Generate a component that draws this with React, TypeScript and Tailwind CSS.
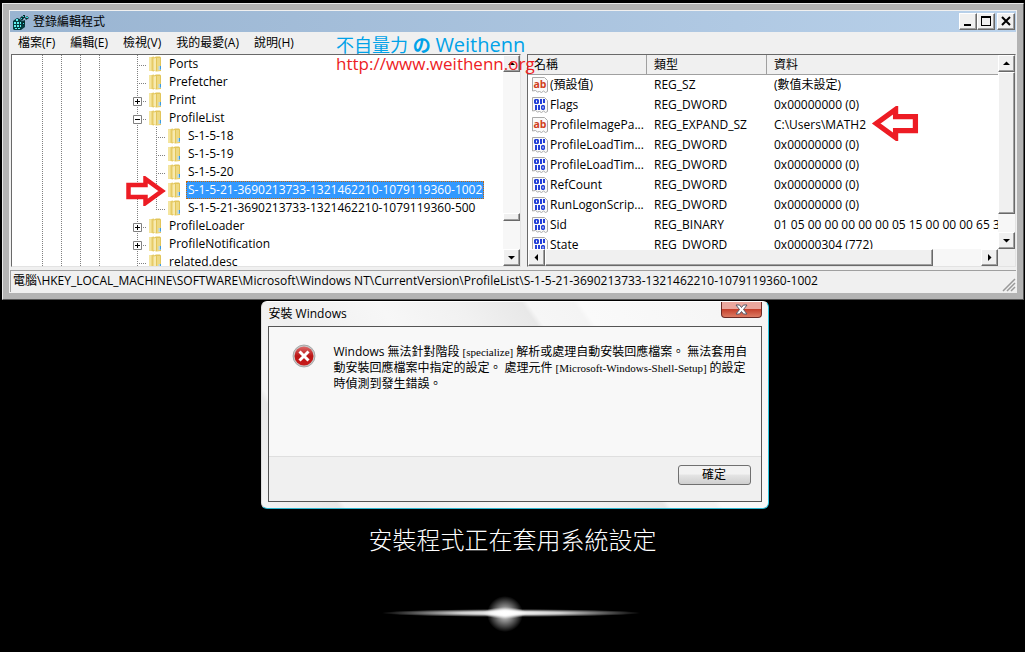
import type { ReactNode } from 'react'

const UI_FONT = "font-['Open_Sans','Noto_Sans_CJK_TC',sans-serif]"

const MENUS = ['檔案(F)', '編輯(E)', '檢視(V)', '我的最愛(A)', '說明(H)']

type Key = {
  name: string
  box?: 'plus' | 'minus'
  child?: boolean
  selected?: boolean
  last?: boolean
}

const KEYS: Key[] = [
  { name: 'Ports' },
  { name: 'Prefetcher' },
  { name: 'Print', box: 'plus' },
  { name: 'ProfileList', box: 'minus' },
  { name: 'S-1-5-18', child: true },
  { name: 'S-1-5-19', child: true },
  { name: 'S-1-5-20', child: true },
  { name: 'S-1-5-21-3690213733-1321462210-1079119360-1002', child: true, selected: true },
  { name: 'S-1-5-21-3690213733-1321462210-1079119360-500', child: true, last: true },
  { name: 'ProfileLoader', box: 'plus' },
  { name: 'ProfileNotification', box: 'plus' },
  { name: 'related.desc' },
]

const VALUES = [
  { name: '(預設值)', type: 'REG_SZ', data: '(數值未設定)', text: true },
  { name: 'Flags', type: 'REG_DWORD', data: '0x00000000 (0)' },
  { name: 'ProfileImagePa...', type: 'REG_EXPAND_SZ', data: 'C:\\Users\\MATH2', text: true },
  { name: 'ProfileLoadTim...', type: 'REG_DWORD', data: '0x00000000 (0)' },
  { name: 'ProfileLoadTim...', type: 'REG_DWORD', data: '0x00000000 (0)' },
  { name: 'RefCount', type: 'REG_DWORD', data: '0x00000000 (0)' },
  { name: 'RunLogonScrip...', type: 'REG_DWORD', data: '0x00000000 (0)' },
  { name: 'Sid', type: 'REG_BINARY', data: '01 05 00 00 00 00 00 05 15 00 00 00 65 3' },
  { name: 'State', type: 'REG_DWORD', data: '0x00000304 (772)' },
]

export default function App() {
  return (
    <main className={`relative min-h-screen overflow-hidden bg-black text-xs text-black ${UI_FONT}`}>
      <RegistryEditor />
      <SetupDialog />

      <p className="mt-[15px] text-center text-2xl font-light text-white">安裝程式正在套用系統設定</p>
      <Glow />

      <div className="absolute left-[336px] top-[34px] whitespace-nowrap">
        <p className="text-lg leading-[22px] text-[#00a2e8]">
          不自量力 <b>の</b> <span className="text-xl leading-[22px]">Weithenn</span>
        </p>
        <p className="text-[17px] leading-4 text-[#ed1c24]">http://www.weithenn.org</p>
      </div>
      <RedArrow className="absolute left-[126px] top-[176px] h-[30px] w-10" />
      <RedArrow className="absolute left-[871px] top-[106px] h-[35px] w-12 rotate-180" />
    </main>
  )
}

function RegistryEditor() {
  return (
    <section className="ml-0.5 mr-px mt-[3px] border border-b-[#555] border-l-[#e8e8e8] border-r-[#555] border-t-[#e8e8e8] bg-[#b3b3b3] p-1.5">
      <div className="border border-[#f0f0f0] bg-[#f0f0f0]">
        <header className="flex h-[21px] items-center gap-1 bg-linear-to-r from-[#99b4d1] to-[#b9d1ea] pl-[3px] pr-px">
          <RegeditIcon />
          <h1 className="flex-1">登錄編輯程式</h1>
          <div className="flex">
            <BevelButton label="最小化" className="h-[17px] w-[18px]">
              <path d="M4 10h7v2H4z" />
            </BevelButton>
            <BevelButton label="最大化" className="mr-0.5 h-[17px] w-[18px]">
              <path fillRule="evenodd" d="M3 2h10v10H3zM4 4v7h8V4z" />
            </BevelButton>
            <BevelButton label="關閉" className="h-[17px] w-[18px]">
              <path d="m4 3 8 8m0-8-8 8" stroke="#000" strokeWidth="2" />
            </BevelButton>
          </div>
        </header>

        <nav className="flex h-[22px] items-center gap-[15px] pl-2">
          {MENUS.map((menu) => (
            <button key={menu} type="button">
              {menu}
            </button>
          ))}
        </nav>

        <div className="flex h-[213px] gap-1.5 pl-px">
          <KeyTree />
          <ValueList />
        </div>

        <footer className="mt-[3px] flex h-[22px] justify-between border-l border-t border-[#a0a0a0] pl-[2px]">
          <span className="whitespace-nowrap leading-5">
            電腦\HKEY_LOCAL_MACHINE\SOFTWARE\Microsoft\Windows NT\CurrentVersion\ProfileList\S-1-5-21-3690213733-1321462210-1079119360-1002
          </span>
          <svg className="size-[14px] self-end" viewBox="0 0 14 14" stroke="#999" strokeWidth="1.500" aria-hidden="true">
            <path d="M1 13 13 1M5 13l8-8M9 13l4-4" />
          </svg>
        </footer>
      </div>
    </section>
  )
}

function KeyTree() {
  return (
    <div className="flex w-[510px] shrink-0 border border-b-[#e3e3e3] border-l-[#696969] border-r-[#e3e3e3] border-t-[#696969] bg-white">
      <ul className="flex-1 overflow-hidden">
        {KEYS.map((key) => (
          <li key={key.name} className="flex h-[18px] items-center pl-[21px]">
            <Guide line="full" />
            <Guide line="full" />
            <Guide line="full" />
            <Guide line="full" />
            <Guide line="none" />
            <Guide line="full" branch={!key.child} box={key.box} />
            {key.child && <Guide line={key.last ? 'half' : 'full'} branch />}
            <FolderIcon />
            <span
              className={
                key.selected
                  ? 'ml-1 h-[18px] whitespace-nowrap border border-dotted border-[#c60] bg-[#39f] px-px leading-4 text-white'
                  : 'ml-1 whitespace-nowrap px-0.5 leading-[18px]'
              }
            >
              {key.name}
            </span>
          </li>
        ))}
      </ul>
      <div className="flex w-[17px] flex-col bg-[#f7f7f7]">
        <BevelButton label="向上" className="h-[17px] w-full">
          <path d="M4 9h7L7.500 5.500z" />
        </BevelButton>
        <div className="flex-1" />
        <Thumb className="h-2" />
        <div className="h-7" />
        <BevelButton label="向下" className="h-[17px] w-full">
          <path d="M4 6h7L7.500 9.500z" />
        </BevelButton>
      </div>
    </div>
  )
}

function ValueList() {
  return (
    <div className="flex min-w-0 flex-1 flex-col border border-b-[#e3e3e3] border-l-[#696969] border-r-[#e3e3e3] border-t-[#696969] bg-white">
      <div className="flex min-h-0 flex-1">
        <div className="min-w-0 flex-1 overflow-hidden">
          <table className="w-full table-fixed border-separate border-spacing-0 text-left">
            <thead>
              <tr className="h-5 bg-[#f0f0f0]">
                <th className="w-[119px] border-b border-r border-[#a0a0a0] p-0 pl-1.5 font-normal leading-[18px]">名稱</th>
                <th className="w-[120px] border-b border-r border-[#a0a0a0] p-0 pl-[7px] font-normal leading-[18px]">類型</th>
                <th className="border-b border-[#a0a0a0] p-0 pl-[7px] font-normal leading-[18px]">資料</th>
              </tr>
            </thead>
            <tbody>
              {VALUES.map((value, i) => (
                <tr key={i} className="h-5 whitespace-nowrap">
                  <td className="p-0 pl-1">
                    <span className="flex h-5 items-center gap-0.5">
                      {value.text ? <StringIcon /> : <BinaryIcon />}
                      {value.name}
                    </span>
                  </td>
                  <td className="p-0 pl-[7px]">{value.type}</td>
                  <td className="overflow-hidden p-0 pl-[7px]">{value.data}</td>
                </tr>
              ))}
            </tbody>
          </table>
        </div>
        <div className="flex w-[17px] flex-col bg-[#f7f7f7]">
          <BevelButton label="向上" className="h-[17px] w-full">
            <path d="M4 9h7L7.500 5.500z" />
          </BevelButton>
          <Thumb className="flex-1" />
          <div className="h-[18px]" />
          <BevelButton label="向下" className="h-[17px] w-full">
            <path d="M4 6h7L7.500 9.500z" />
          </BevelButton>
        </div>
      </div>
      <div className="flex h-[17px] bg-[#f7f7f7]">
        <BevelButton label="向左" className="h-full w-[17px]">
          <path d="M9 4v7L5.500 7.500z" />
        </BevelButton>
        <Thumb className="flex-1" />
        <div className="w-12" />
        <BevelButton label="向右" className="h-full w-[17px]">
          <path d="M6 4v7l3.500-3.500z" />
        </BevelButton>
        <div className="w-[17px] bg-[#f0f0f0]" />
      </div>
    </div>
  )
}

function SetupDialog() {
  return (
    <section
      role="dialog"
      aria-labelledby="setup-title"
      className="mx-auto mt-px w-[508px] translate-x-0.5 rounded-md border border-b-[#2bb5cf] border-l-[#ddd] border-r-[#2bc4e0] border-t-white bg-[linear-gradient(55deg,#f4f4f4_0%,#e9e9e9_12%,#f6f6f6_13%,#f0f0f0_24%,#f7f7f7_40%,#f1f1f1_52%,#e8e8e8_62%,#f6f6f6_63%,#f4f4f4_70%,#fafafa_71%,#f4f4f4_100%)] px-1.5 pb-1.5"
    >
      <header className="flex h-6 items-center justify-between pl-px">
        <h2 id="setup-title">安裝 Windows</h2>
        <button
          type="button"
          aria-label="關閉"
          className="flex h-4 w-[41px] items-center justify-center self-start rounded-b border border-t-0 border-[#6b2a24] bg-linear-to-b from-[#eba79d] from-45% via-[#c5402c] via-50% to-[#dc7a62]"
        >
          <svg className="h-[11px] w-[13px]" viewBox="0 0 13 11" aria-hidden="true">
            <path
              d="M1 1h3.500l2 2.500 2-2.500H12L8.500 5.500 12 10H8.500l-2-2.500-2 2.500H1l3.500-4.500z"
              fill="#fff"
              stroke="#555b6b"
            />
          </svg>
        </button>
      </header>
      <div className="border border-[#555]">
        <div className="flex h-[129px] gap-[18px] bg-[#f8f8f8] pl-[23px] pt-[17px]">
          <ErrorIcon />
          <p className="whitespace-nowrap font-['Liberation_Serif','Noto_Sans_CJK_TC',serif] leading-4">
            <span className={UI_FONT}>Windows</span> 無法針對階段 <span className="text-[11px]">[specialize]</span>{' '}
            解析或處理自動安裝回應檔案。 無法套用自
            <br />
            動安裝回應檔案中指定的設定。 處理元件{' '}
            <span className="text-[11px]">[Microsoft-Windows-Shell-Setup]</span> 的設定
            <br />
            時偵測到發生錯誤。
          </p>
        </div>
        <div className="flex h-[45px] justify-end border-t border-[#dfdfdf] bg-[#f0f0f0] pr-2.5 pt-2">
          <button
            type="button"
            className="h-5 w-[73px] rounded-[3px] border border-[#707070] bg-linear-to-b from-[#f2f2f2] from-45% via-[#e4e4e4] via-50% to-[#cfcfcf] leading-[18px]"
          >
            確定
          </button>
        </div>
      </div>
    </section>
  )
}

function BevelButton({ label, className, children }: { label: string; className: string; children: ReactNode }) {
  return (
    <button
      type="button"
      aria-label={label}
      className={`shrink-0 overflow-hidden border border-b-[#696969] border-l-white border-r-[#696969] border-t-white bg-[#f0f0f0] shadow-[inset_-1px_-1px_0_#a0a0a0] ${className}`}
    >
      <svg className="block h-[15px] w-4" viewBox="0 0 16 15" aria-hidden="true">
        {children}
      </svg>
    </button>
  )
}

function Thumb({ className }: { className: string }) {
  return (
    <div
      className={`border border-b-[#696969] border-l-white border-r-[#696969] border-t-white bg-[#f0f0f0] shadow-[inset_-1px_-1px_0_#a0a0a0] ${className}`}
    />
  )
}

// one 19px column of the dotted tree lines
function Guide({ line, branch, box }: { line: 'full' | 'half' | 'none'; branch?: boolean; box?: 'plus' | 'minus' }) {
  return (
    <svg className="h-[18px] w-[19px] shrink-0" viewBox="0 0 19 18" fill="none" stroke="#808080" aria-hidden="true">
      {line !== 'none' && <path d={line === 'half' ? 'M9.500 0V10' : 'M9.500 0V18'} strokeDasharray="1 1" />}
      {branch && <path d="M9 10.500H19" strokeDasharray="1 1" />}
      {box && <path d="M5.500 6.500h8v8h-8z" fill="#fff" />}
      {box && <path d={box === 'plus' ? 'M7 10.500h5M9.500 8v5' : 'M7 10.500h5'} stroke="#000" />}
    </svg>
  )
}

function FolderIcon() {
  return (
    <svg className="size-4 shrink-0" viewBox="0 0 16 16" aria-hidden="true">
      <path d="M2 1.500 7 .5v15L2 14.500z" fill="#e6cb66" />
      <path d="M2 1.500 4.500 1v14L2 14.500z" fill="#f5e6a0" />
      <path d="M7 1.500 9 .5h4l1 1V15l-5 .5-2-1z" fill="#e2c55a" />
      <path d="M6.500 2.500 9 2v13l-2.500-1z" fill="#f7eab0" />
      <path d="M10 2h3v12.500l-3 .5z" fill="#eed982" />
      <path d="M11.500 10H14v4h-2.500z" fill="#b8d8ea" />
      <path d="M13 10h1v3.500h-1z" fill="#3d9bdc" />
    </svg>
  )
}

function StringIcon() {
  return (
    <svg className="size-4 shrink-0" viewBox="0 0 16 16" aria-hidden="true">
      <Sheet />
      <text x="1.500" y="10.500" fontSize="10.500" fontWeight="700" fill="#d0401b">
        ab
      </text>
    </svg>
  )
}

// two rows of bits, 011 over 110
function BinaryIcon() {
  return (
    <svg className="size-4 shrink-0" viewBox="0 0 16 16" aria-hidden="true">
      <Sheet />
      <g fill="#2340d8">
        <path fillRule="evenodd" d="M3 2h3l1 1v3L6 7H3L2 6V3zM4 3.500v2h1v-2z" />
        <path d="M8 2h2v5H8zM11 2h2v4h-2z" />
        <path d="M3 8h2v5H3zM6 8h2v5H6z" />
        <path fillRule="evenodd" d="M10 8h2l1 1v3l-1 1h-2l-1-1V9zM10.500 9.500v2h1v-2z" />
      </g>
    </svg>
  )
}

function Sheet() {
  return (
    <path
      d="M.5.5h12l3 3v11l-2 1-2-1.500-2 1.500-2-1-2 .5-2-1.500-3 .5z"
      fill="#fafafa"
      stroke="#aaa"
    />
  )
}

function RegeditIcon() {
  return (
    <svg className="size-4" viewBox="0 0 16 16" aria-hidden="true">
      <path d="M0 7 4 4l3 1 2 2 3-1v7l-4 3H1l-1-1z" fill="#053c40" />
      <path d="M1 8h2v2H1zM4 8h2v2H4zM1 11h2v2H1zM4 11h2v2H4zM7 11h1v2H7zM3 5h2v2H3zM2 14h2v1H2zM5 14h2v1H5zM7 8h1v2H7z" fill="#5ff0f0" />
      <path d="m7 4 2-2 2 2-2 3zM10 1h2v3h-2zM12 4l2-2 2 2-3 2zM9 8l3-1v3l-2 2z" fill="#032b2e" />
      <path d="M8 4h1v1H8zM13 3h2v1h-2zM10 9h1v1h-1zM10 2h1v1h-1z" fill="#2fe0e0" />
    </svg>
  )
}

function ErrorIcon() {
  return (
    <svg className="size-6 shrink-0" viewBox="0 0 24 24" aria-hidden="true">
      <defs>
        <linearGradient id="err" x1="0" y1="0" x2="0" y2="1">
          <stop offset="0" stopColor="#dd6a6a" />
          <stop offset=".5" stopColor="#bb1616" />
          <stop offset="1" stopColor="#c81c1c" />
        </linearGradient>
      </defs>
      <circle cx="12" cy="12" r="11" fill="#c9c9c9" stroke="#999" strokeWidth=".8" />
      <circle cx="12" cy="12" r="9.500" fill="url(#err)" />
      <path d="m7.500 7.500 9 9m0-9-9 9" stroke="#fff" strokeWidth="3" />
    </svg>
  )
}

function RedArrow({ className }: { className: string }) {
  return (
    <svg className={className} viewBox="0 0 40 30" aria-hidden="true">
      <path d="M2.500 9h17V3L36 15 19.500 27v-6h-17z" fill="#fff" stroke="#ed1c24" strokeWidth="4.500" />
    </svg>
  )
}

function Glow() {
  return (
    <svg className="mx-auto mt-8 block h-[50px] w-[300px]" viewBox="0 0 300 50" aria-hidden="true">
      <defs>
        <radialGradient id="flare">
          <stop offset="0" stopColor="#fff" />
          <stop offset=".4" stopColor="#fff" stopOpacity=".8" />
          <stop offset="1" stopColor="#fff" stopOpacity="0" />
        </radialGradient>
        <radialGradient id="halo">
          <stop offset="0" stopColor="#fff" stopOpacity=".9" />
          <stop offset=".5" stopColor="#fff" stopOpacity=".45" />
          <stop offset="1" stopColor="#fff" stopOpacity="0" />
        </radialGradient>
      </defs>
      <ellipse cx="148" cy="25" rx="130" ry="4" fill="url(#flare)" />
      <circle cx="142" cy="26" r="18" fill="url(#halo)" />
      <ellipse cx="142" cy="25" rx="22" ry="6" fill="url(#flare)" />
    </svg>
  )
}
